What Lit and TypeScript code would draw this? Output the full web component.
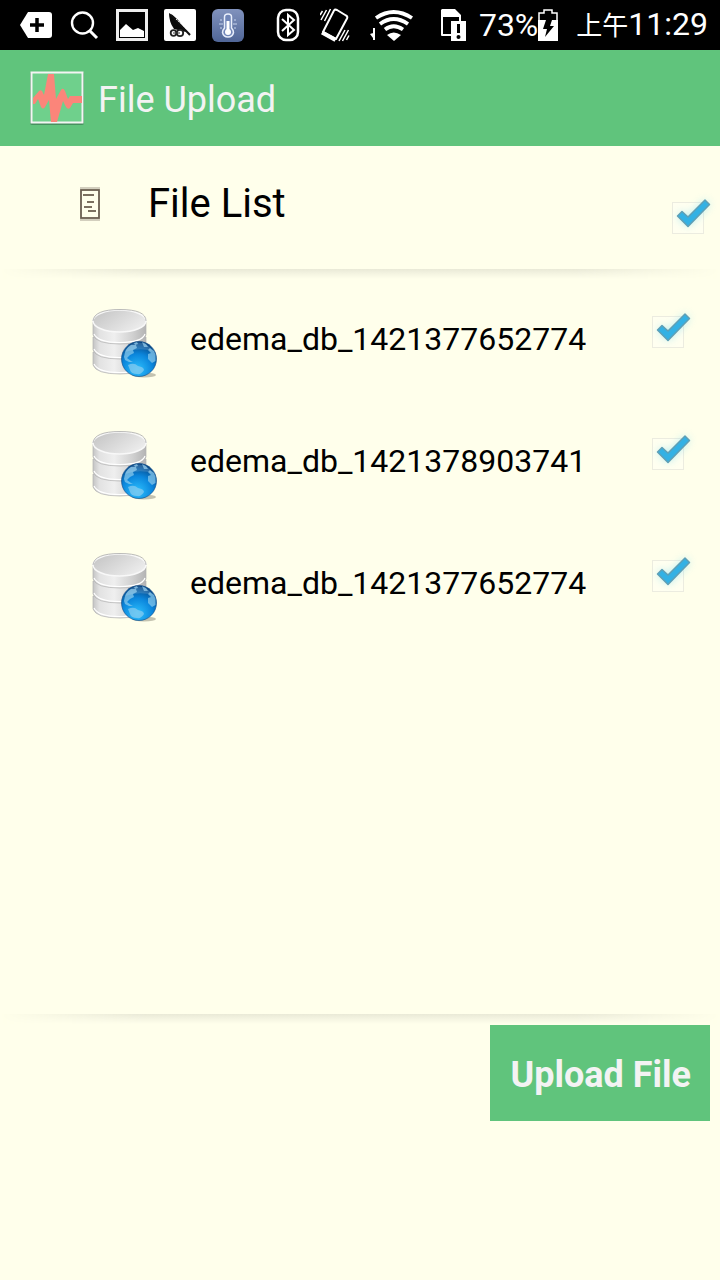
import { LitElement, html, css, svg } from "lit";
import { customElement, property, state } from "lit/decorators.js";

@customElement("status-bar")
class StatusBar extends LitElement {
  static styles = css`
    :host {
      display: flex;
      align-items: center;
      justify-content: space-between;
      height: 50px;
      padding: 0 12px 0 20px;
      background: #000;
      color: #fff;
      font: 32px/50px Roboto, "Noto Sans CJK SC", sans-serif;
      white-space: nowrap;
    }
    .group { display: flex; align-items: center; }
    .notices { gap: 14px; }
    .system { gap: 20px; }
    .battery { display: flex; align-items: center; margin: 0 -4px 0 -8px; }
    .clock { padding-left: 2px; }
    .era { font-size: 26px; }
    svg { display: block; fill: #fff; stroke: none; }
    .line { fill: none; stroke: #fff; }
  `;
  render() {
    return html`
      <div class="group notices">
        <svg width="34" height="34" viewBox="0 0 34 34"><path d="M8 4H29Q32 4 32 7V27Q32 30 29 30H8L0 17Z"/><path d="M17 10V24M10 17H24" stroke="#000" stroke-width="3.5"/></svg>
        <svg class="line" width="34" height="34" viewBox="0 0 34 34" stroke-width="2.4"><circle cx="14.500" cy="15" r="10.500"/><path d="M22 23L29 30" stroke-width="3"/></svg>
        <svg width="34" height="34" viewBox="0 0 34 34"><path d="M1.500 2.500H30.500V31.500H1.500Z" fill="none" stroke="#eee" stroke-width="3"/><path d="M4 29V22L10 16L17 22L22 20L28 23V29Z"/></svg>
        <svg width="34" height="34" viewBox="0 0 34 34"><rect x="0" y="1" width="32" height="32" rx="2"/><path d="M5 5Q5 14 10 21L22 24Q15 10 5 5Z" fill="#0a0a0a"/><path d="M7 7L26 27" stroke="#111" stroke-width="2"/><path d="M12 11L23 22" stroke="#ddd" stroke-dasharray="2 1"/><circle cx="9.500" cy="25" r="2.800" fill="#fff" stroke="#222" stroke-width="1.800"/><circle cx="16" cy="25" r="3.200" fill="#fff" stroke="#222" stroke-width="1.800"/><path d="M9 25H16" stroke="#333"/></svg>
        <svg width="34" height="34" viewBox="0 0 34 34"><defs><linearGradient id="sky" x2="0" y2="1"><stop stop-color="#8192bd"/><stop offset="1" stop-color="#506697"/></linearGradient></defs><rect y="1" width="32" height="33" rx="6" fill="url(#sky)"/><path d="M12.500 20V9Q12.500 6 16 6T19.500 9V20Q21.500 22 21.500 24.500Q20.500 29 16 29T10.500 24.500Q10.500 22 12.500 20Z" fill="#7186b8" stroke="#e8eefb" stroke-width="1.500"/><path d="M16 13V24" stroke="#fff" stroke-width="3"/><circle cx="16" cy="24" r="3"/><path d="M7 16H11M21 16H25M8 12H10M22 12H24M8 20H10M22 20H24" stroke="#c9d5ee"/></svg>
      </div>
      <div class="group system">
        <svg class="line" width="24" height="34" viewBox="0 0 24 34"><rect x="2" y="2" width="20" height="30" rx="8" stroke-width="2.500"/><path d="M6 11L18 22L12 27V7L18 12L6 23" stroke-width="2"/></svg>
        <svg class="line" width="30" height="34" viewBox="0 0 30 34" stroke-width="1.5"><path d="M14 2.500Q15 1 17 2L26 7.500Q28 8.500 27 10.500L16 31L3 24Z" stroke-width="2" stroke-linejoin="round"/><path d="M2 24.500L15.500 32" stroke-width="4"/><path d="M0 7L2.500 3M1 12L6.500 2M4.500 13L10.500 1M19 33L25 22M22.500 33L28.500 22M26.500 32L29 27.500"/></svg>
        <svg width="43" height="34" viewBox="0 0 43 34"><path d="M3 20H5V32H3ZM0 26L3 25V30Z"/><g fill="none" stroke="#fff" stroke-width="3.800"><path d="M6 10Q23.500 -2 42 10"/><path d="M10 16Q23.500 6 38 16"/><path d="M15 21.500Q23.500 15 33 21.500"/></g><path d="M17 27Q23.500 22 31 27L24 33Z"/></svg>
        <svg width="34" height="34" viewBox="0 0 34 34"><path d="M9 1H22L28 7V13H20V28H9Q8 28 8 27V2Z"/><path d="M10 9H26V13H18V26H10Z" fill="#000"/><rect x="18" y="13" width="15" height="20"/><path d="M25.500 16V25" stroke="#000" stroke-width="3"/><circle cx="25.500" cy="29" r="2" fill="#000"/></svg>
        <span class="battery">73%<svg width="20" height="32" viewBox="0 0 20 32"><path d="M1 11V4H6V1H14V4H19V11" fill="none" stroke="#fff" stroke-width="1.500"/><path d="M0 11H20V32H0Z"/><path d="M8 11H14L12 17H16L7 28L9 20H5Z" fill="#000"/></svg></span>
        <span class="clock"><span class="era">上午</span>11:29</span>
      </div>
    `;
  }
}

@customElement("glow-check")
class GlowCheck extends LitElement {
  static styles = css`
    :host { display: block; }
    .wrap { position: relative; display: block; width: 32px; height: 32px; }
    .box {
      appearance: none;
      display: block;
      box-sizing: border-box;
      width: 100%;
      height: 100%;
      margin: 0;
      border: 1px solid #ecece0;
      background: #fffff0;
    }
    .mark { position: absolute; left: -4px; top: -11px; pointer-events: none; overflow: visible; }
    .halo { fill: #7bdcf0; opacity: .6; filter: blur(4px); }
  `;
  @property() label = "";
  @property({ type: Boolean }) checked = false;
  private toggle(e: Event) {
    this.checked = (e.target as HTMLInputElement).checked;
    this.dispatchEvent(new CustomEvent("toggled", { detail: this.checked }));
  }
  render() {
    const tick = "M9.500 25L14 20.500L20 26L37 9L41.500 13.500L20 35.500Z";
    return html`<label class="wrap">
      <input class="box" type="checkbox" aria-label=${this.label} .checked=${this.checked} @change=${this.toggle}>
      ${this.checked
        ? html`<svg class="mark" width="48" height="48" viewBox="0 0 48 48"><path class="halo" d=${tick}/><path d=${tick} fill="#33b1e4" stroke="#5f9fb5" stroke-width="1.500" stroke-linejoin="round"/></svg>`
        : null}
    </label>`;
  }
}

const databaseIcon = html`<svg width="70" height="72" viewBox="0 0 70 72" aria-hidden="true">
  <defs>
    <linearGradient id="side"><stop stop-color="#c4c4c4"/><stop offset=".12" stop-color="#e2e2e2"/><stop offset=".4" stop-color="#efefef"/><stop offset=".75" stop-color="#d0d0d0"/><stop offset="1" stop-color="#b4b4b4"/></linearGradient>
    <linearGradient id="lid" x2="1" y2=".6"><stop stop-color="#c2c2c2"/><stop offset="1" stop-color="#ececec"/></linearGradient>
    <radialGradient id="sea" cx=".45" cy=".8" r=".8"><stop stop-color="#2cc0fd"/><stop offset=".55" stop-color="#0b86dc"/><stop offset="1" stop-color="#06417e"/></radialGradient>
  </defs>
  <ellipse cx="54" cy="68" rx="12" ry="2.500" fill="#8a8775" opacity=".5"/>
  ${[45, 30, 15].map(y => svg`<path d="M3 ${y}V${y + 13}Q6 ${y + 22} 30 ${y + 22}T56 ${y + 13}V${y}Z" fill="url(#side)" stroke="#b2b2b2" stroke-width=".7"/><path d="M4 ${y + 12}Q8 ${y + 20.5} 30 ${y + 20.5}T55 ${y + 12}" fill="none" stroke="#fff" stroke-width="1.2"/>`)}
  <ellipse cx="29.500" cy="14" rx="26.500" ry="11" fill="url(#lid)" stroke="#f8f8f8" stroke-width="1.500"/>
  <path d="M3 14Q4 2.500 30 2.500T56 14" fill="none" stroke="#aaa" stroke-width=".8"/>
  <circle cx="49" cy="52" r="17.500" fill="url(#sea)" stroke="#0a4785" stroke-width=".6"/>
  <path d="M34 50Q35 41 41 38L46 38L47 41L43 43L44 46L40 48L37 51L41 54L43 55L39 55L35 53ZM38 58Q44 55 48 59Q54 60 54 63Q51 68 47 67Q41 67 40 63ZM44 36L47 35L48 37L45 38ZM52 35L56 37L58 40L54 40ZM60 41L64 44L65.500 48L65.500 54L62 56L58 52L58 47L61 46L58 43Z" fill="#8ccdf0" opacity=".7"/>
  <path d="M35 45Q39 35 49 35.500T62 44Q49 40 35 45Z" fill="#fff" opacity=".15"/>
</svg>`;

@customElement("app-root")
class AppRoot extends LitElement {
  static styles = css`
    :host {
      display: flex;
      flex-direction: column;
      min-height: 100vh;
      background: #ffffeb;
      color: #000;
      font-family: Roboto, "Noto Sans CJK SC", sans-serif;
    }
    h1, h2, ul { margin: 0; padding: 0; font-weight: 400; }
    svg { display: block; }
    .app-bar {
      display: flex;
      align-items: center;
      gap: 12px;
      height: 96px;
      padding: 0 28px;
      background: #60c47c;
      color: #f3f3f3;
    }
    .app-bar h1 { padding-top: 4px; font-size: 36px; line-height: 48px; }
    .list-head {
      display: flex;
      align-items: center;
      height: 116px;
      padding: 0 16px 7px 80px;
    }
    .list-head h2 { flex: 1; padding-left: 48px; font-size: 40px; line-height: 48px; }
    .list-head glow-check { margin-top: 28px; }
    .divider {
      height: 10px;
      background: linear-gradient(#e9e9d7, #f5f5e2 50%, #ffffeb);
      mask-image: linear-gradient(90deg, transparent, #000 20%, #000 80%, transparent);
    }
    .files { flex: 1; padding-top: 3px; list-style: none; }
    .file { display: flex; align-items: center; height: 122px; padding: 0 36px 0 90px; }
    .name { flex: 1; padding: 0 0 8px 30px; font-size: 32px; line-height: 40px; }
    .file glow-check { margin-bottom: 22px; }
    .actions { display: flex; justify-content: flex-end; align-items: flex-start; height: 256px; padding: 1px 10px 0; box-sizing: border-box; }
    .upload {
      height: 96px;
      padding: 4px 19px 0 20px;
      border: 0;
      background: #60c47c;
      color: #f3f3f3;
      font: 700 36px/48px Roboto, sans-serif;
      white-space: nowrap;
    }
  `;
  @state() private files = [
    { name: "edema_db_1421377652774", checked: true },
    { name: "edema_db_1421378903741", checked: true },
    { name: "edema_db_1421377652774", checked: true },
  ];
  private setAll(checked: boolean) {
    this.files = this.files.map(f => ({ ...f, checked }));
  }
  private setOne(index: number, checked: boolean) {
    this.files = this.files.map((f, i) => (i === index ? { ...f, checked } : f));
  }
  render() {
    return html`
      <status-bar></status-bar>
      <header class="app-bar">
        <svg width="58" height="60" viewBox="0 2 58 60" aria-hidden="true">
          <rect x="2" y="6" width="54" height="53" rx="2" fill="#3f8055" opacity=".75"/>
          <rect x="3.500" y="6.500" width="51" height="50" fill="#6fd08c" stroke="#f4f4f4" stroke-width="2"/>
          <path d="M20 8H26L28 33L33 24Q35 21 37 25L40 33L42 30H54V37H45L42 42Q40 44 38 41L35 35L29 56H23L21 34L17 41Q15 44 13 41L10 33L7 38H5V32L11 25Q14 23 15 27L16 29Z" fill="#fb857a"/>
        </svg>
        <h1>File Upload</h1>
      </header>
      <section class="list-head">
        <svg width="20" height="34" viewBox="0 0 20 34" aria-hidden="true">
          <path d="M0 1H20M0 33H20" stroke="#d3cfbe" stroke-width="2"/>
          <rect x="1" y="3" width="18" height="28" fill="none" stroke="#6b5f50" stroke-width="1.800"/>
          <path d="M3 8H14M7 15H14M4 20H12M8 24H16" stroke="#7b705f" stroke-width="2"/>
        </svg>
        <h2>File List</h2>
        <glow-check label="Select all files" .checked=${this.files.every(f => f.checked)} @toggled=${(e: CustomEvent) => this.setAll(e.detail)}></glow-check>
      </section>
      <div class="divider"></div>
      <ul class="files">
        ${this.files.map((f, i) => html`<li class="file">
          ${databaseIcon}
          <span class="name">${f.name}</span>
          <glow-check .label=${f.name} .checked=${f.checked} @toggled=${(e: CustomEvent) => this.setOne(i, e.detail)}></glow-check>
        </li>`)}
      </ul>
      <div class="divider"></div>
      <footer class="actions"><button class="upload" type="button">Upload File</button></footer>
    `;
  }
}
